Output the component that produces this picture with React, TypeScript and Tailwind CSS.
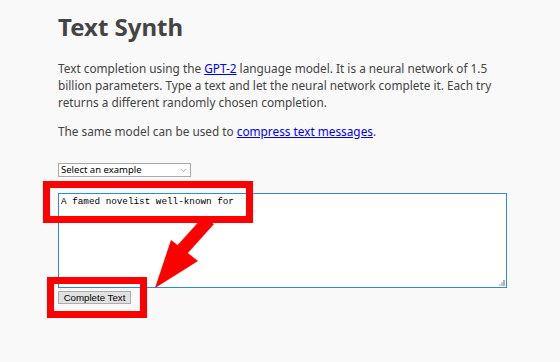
import { ChevronDown } from 'lucide-react'

function Annotations() {
  return (
    <>
      <div className="absolute left-[43px] top-[181px] w-[210px] h-[42px] border-[7px] border-[#ff0000]" />
      <div className="absolute left-[47px] top-[277px] w-[100px] h-[41px] border-[7px] border-[#ff0000]" />
      <svg className="absolute left-0 top-0 pointer-events-none" width="560" height="362">
        <line x1="209" y1="220" x2="180" y2="252" stroke="#ff0000" strokeWidth="13" />
        <polygon points="155,288 171,240 198,261" fill="#ff0000" />
      </svg>
    </>
  )
}

export default function App() {
  return (
    <div className="relative w-[560px] h-[362px] bg-[#f9f9f9] overflow-hidden" style={{ fontFamily: '"Noto Sans", sans-serif' }}>
      <div className="pl-[58px] pt-[12px]">
        <h1 className="text-[24px] font-bold text-[#444] leading-[30px]">Text Synth</h1>
        <p className="mt-[18px] w-[440px] text-[11.8px] leading-[17px] text-[#444]">
          Text completion using the <a href="#" className="text-[#0000ee] underline">GPT-2</a> language model. It is a neural network of 1.5 billion parameters. Type a text and let the neural network complete it. Each try returns a different randomly chosen completion.
        </p>
        <p className="mt-[12px] text-[11.8px] leading-[17px] text-[#444]">
          The same model can be used to <a href="#" className="text-[#0000ee] underline">compress text messages</a>.
        </p>
        <div className="mt-[23px] flex items-center justify-between w-[133px] h-[14px] bg-white border border-[#a9a9a9] px-[2px] text-[9.5px] text-black">
          <span>Select an example</span>
          <ChevronDown size={9} strokeWidth={1.5} className="text-[#666]" />
        </div>
        <div className="relative mt-[16px] w-[449px] h-[95px] bg-white border border-[#3088d8] px-[2px] py-[1px] text-[9.3px] leading-[14px] text-black" style={{ fontFamily: '"Liberation Mono", monospace' }}>
          A famed novelist well-known for
          <svg className="absolute right-[1px] bottom-[1px]" width="6" height="6">
            <rect x="4" y="0" width="2" height="6" fill="#b0b0b0" />
            <rect x="2" y="2" width="2" height="4" fill="#c8c8c8" />
            <rect x="0" y="4" width="2" height="2" fill="#d8d8d8" />
          </svg>
        </div>
        <button className="block mt-[3px] w-[73px] h-[13px] bg-[#e1e1e1] border border-[#adadad] text-[9.7px] leading-[11px] text-black" style={{ fontFamily: '"Liberation Sans", sans-serif' }}>
          Complete Text
        </button>
      </div>
      <Annotations />
    </div>
  )
}
